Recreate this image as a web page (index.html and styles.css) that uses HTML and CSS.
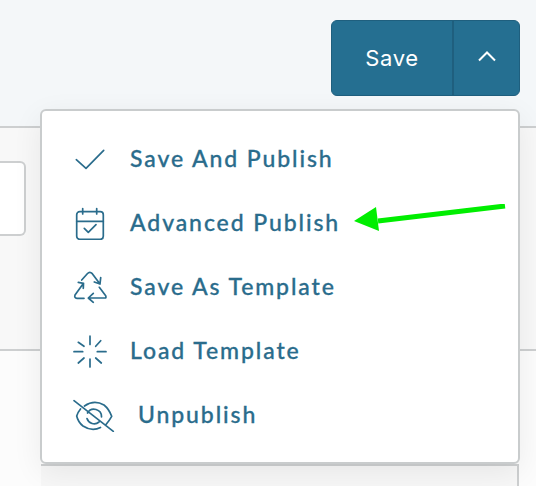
FILE: index.html
```html
<!DOCTYPE html>
<html lang="en">
<head>
<meta charset="utf-8">
<title>Save menu</title>
<link rel="stylesheet" href="styles.css">
</head>
<body>
<header class="toolbar">
  <div class="split-button">
    <button class="split-main">Save</button>
    <button class="split-toggle" aria-label="Toggle menu">
      <svg width="20" height="12" viewBox="0 0 20 12"><path d="M2 10.500 10 2.500l8 8"/></svg>
    </button>
  </div>
</header>
<main>
  <section class="row row-form"><div class="field"></div></section>
  <section class="row row-plain"><div class="under-box"></div></section>
</main>
<nav class="menu">
  <a class="item">
    <svg class="icon" width="36" height="36" viewBox="0 0 36 36"><path d="M4.300 19.700 14 28.300 31.700 10.300"/></svg>
    <span>Save And Publish</span>
  </a>
  <a class="item">
    <svg class="icon" width="36" height="36" viewBox="0 0 36 36"><rect x="4.700" y="7.700" width="26.600" height="27.600" rx="3"/><path d="M10.700 4.500V10M24.700 4.500V10M4.700 17.300H31.300M12.300 24.300l4 4 7.700-7.600"/></svg>
    <span>Advanced Publish</span>
  </a>
  <a class="item">
    <svg class="icon" width="36" height="36" viewBox="0 0 36 36"><path d="M9.700 12 15.300 5.700Q17.800 3 20.300 5.700L28 16M22.300 14 28 16 28.700 9.700M11.500 15.300 3 27Q2 30 5 30.300H12M6.300 14.300 11.500 15.300 11.300 20.300M33 30H16.300M21.300 25.300 16.300 30 21.300 34.300M27.300 19.300 33.700 27.700Q34.500 30 33 30"/></svg>
    <span>Save As Template</span>
  </a>
  <a class="item">
    <svg class="icon" width="36" height="36" viewBox="0 0 36 36"><path d="M18 4.200V12.500M18 27V35M2 19.700H10.700M25.300 19.700H34M6.300 10.300 12 14.300M28.700 8.700 23.700 14.300M6.300 31 12 26M29.300 31 23.700 26"/></svg>
    <span>Load Template</span>
  </a>
  <a class="item">
    <svg class="icon" width="44" height="36" viewBox="0 0 44 36"><path d="M2 4.700 41.300 35.300M12.500 10Q22 3.500 32 9 37 13 39.700 20.300 37 25 34 28.500M28.500 31.500Q20 36 11 30 6 26 4.700 20 6 16 8.500 13M15.500 17A7.500 7.500 0 0 1 29.500 21M27 26A7.500 7.500 0 0 1 15 22.500"/></svg>
    <span>Unpublish</span>
  </a>
</nav>
<svg class="arrow" width="156" height="30" viewBox="0 0 156 30"><path class="arrow-shaft" d="M151 2 24 17"/><path class="arrow-head" d="M0 17 22 3 25 27Z"/></svg>
</body>
</html>
```
FILE: styles.css
```css
* { box-sizing: border-box; }
html, body { height: 100%; }
body {
  margin: 0;
  background: #fff;
  overflow: hidden;
  font-family: "Lato", "Open Sans", sans-serif;
}
.toolbar {
  height: 126px;
  padding: 20px 16px 0 0;
  display: flex;
  justify-content: flex-end;
  align-items: flex-start;
  background: #f4f7f9;
}
.split-button {
  display: flex;
  width: 189px;
  height: 76px;
  background: #256f91;
  border: 1px solid #1f5f7e;
  border-radius: 6px;
  overflow: hidden;
}
.split-button button {
  border: 0;
  background: none;
  color: #fff;
  padding: 0;
  display: flex;
  align-items: center;
  justify-content: center;
}
.split-main {
  width: 122px;
  font-family: "Inter", sans-serif;
  font-size: 22px;
  letter-spacing: 0.7px;
  font-weight: 400;
  border-right: 2px solid #1f5f7e !important;
}
.split-toggle { flex: 1; padding-bottom: 0; }
.split-toggle svg { fill: none; stroke: #fff; stroke-width: 2; margin-bottom: 4px; }
.row { border-top: 2px solid #cdcfd0; }
.row-form {
  height: 223px;
  padding-top: 33px;
  background: #f8f8f8;
}
.field {
  width: 26px;
  height: 75px;
  background: #fff;
  border: 2px solid #cdcfd0;
  border-left: 0;
  border-radius: 0 6px 6px 0;
}
.row-plain {
  height: 137px;
  padding: 113px 17px 0 41px;
  background: #fcfcfc;
}
.under-box {
  height: 30px;
  background: #f7f7f7;
  border: 2px solid #cdcfd0;
  border-left: 0;
  border-bottom: 0;
}
.menu {
  position: absolute;
  left: 40px;
  top: 109px;
  width: 480px;
  height: 355px;
  padding: 15px 0 0 30px;
  background: #fff;
  border: 2px solid #c9cccd;
  border-radius: 6px;
  box-shadow: 0 8px 30px rgba(0, 0, 0, 0.07);
}
.item {
  display: flex;
  align-items: center;
  gap: 22px;
  height: 64px;
  color: #2a6c8c;
  font-size: 23px;
  font-weight: 500;
  letter-spacing: 1.9px;
  -webkit-text-stroke: 0.3px #2a6c8c;
}
.icon {
  flex: none;
  fill: none;
  stroke: #2a6c8c;
  stroke-width: 1.7;
  stroke-linecap: round;
  stroke-linejoin: round;
}
.arrow {
  position: absolute;
  left: 354px;
  top: 204px;
}
.arrow-shaft { stroke: #00ee00; stroke-width: 5; fill: none; }
.arrow-head { fill: #00ee00; }
```
